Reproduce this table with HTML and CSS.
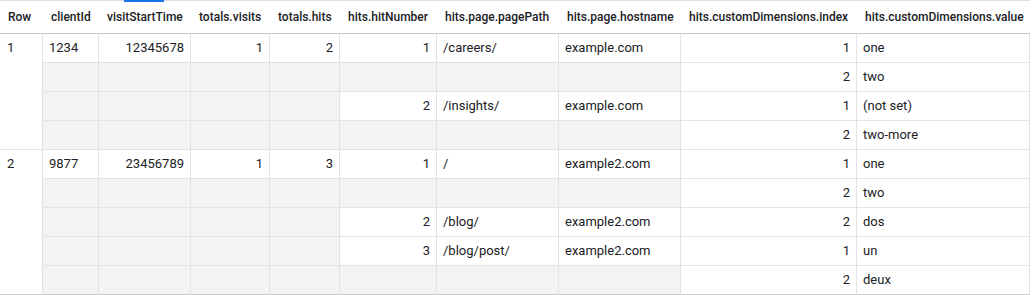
FILE: index.html
```html
<!DOCTYPE html>
<html>
<head>
<meta charset="utf-8">
<link rel="stylesheet" href="styles.css">
</head>
<body>
<div class="wrap">
  <div class="tab-indicator"></div>
  <table class="results">
    <colgroup>
      <col class="c-row"><col class="c-client"><col class="c-start"><col class="c-visits"><col class="c-hits"><col class="c-hitnum"><col class="c-path"><col class="c-host"><col class="c-index"><col class="c-value">
    </colgroup>
    <thead>
      <tr>
        <th>Row</th><th>clientId</th><th>visitStartTime</th><th>totals.visits</th><th>totals.hits</th><th>hits.hitNumber</th><th>hits.page.pagePath</th><th>hits.page.hostname</th><th>hits.customDimensions.index</th><th>hits.customDimensions.value</th>
      </tr>
    </thead>
    <tbody>
      <tr>
        <td class="rownum" rowspan="4">1</td><td>1234</td><td class="num">12345678</td><td class="num">1</td><td class="num">2</td><td class="num">1</td><td>/careers/</td><td>example.com</td><td class="num">1</td><td>one</td>
      </tr>
      <tr>
        <td class="rep"></td><td class="rep"></td><td class="rep"></td><td class="rep"></td><td class="rep"></td><td class="rep"></td><td class="rep"></td><td class="num">2</td><td>two</td>
      </tr>
      <tr>
        <td class="rep"></td><td class="rep"></td><td class="rep"></td><td class="rep"></td><td class="num">2</td><td>/insights/</td><td>example.com</td><td class="num">1</td><td>(not set)</td>
      </tr>
      <tr>
        <td class="rep"></td><td class="rep"></td><td class="rep"></td><td class="rep"></td><td class="rep"></td><td class="rep"></td><td class="rep"></td><td class="num">2</td><td>two-more</td>
      </tr>
      <tr>
        <td class="rownum last" rowspan="5">2</td><td>9877</td><td class="num">23456789</td><td class="num">1</td><td class="num">3</td><td class="num">1</td><td>/</td><td>example2.com</td><td class="num">1</td><td>one</td>
      </tr>
      <tr>
        <td class="rep"></td><td class="rep"></td><td class="rep"></td><td class="rep"></td><td class="rep"></td><td class="rep"></td><td class="rep"></td><td class="num">2</td><td>two</td>
      </tr>
      <tr>
        <td class="rep"></td><td class="rep"></td><td class="rep"></td><td class="rep"></td><td class="num">2</td><td>/blog/</td><td>example2.com</td><td class="num">2</td><td>dos</td>
      </tr>
      <tr>
        <td class="rep"></td><td class="rep"></td><td class="rep"></td><td class="rep"></td><td class="num">3</td><td>/blog/post/</td><td>example2.com</td><td class="num">1</td><td>un</td>
      </tr>
      <tr class="last-row">
        <td class="rep"></td><td class="rep"></td><td class="rep"></td><td class="rep"></td><td class="rep"></td><td class="rep"></td><td class="rep"></td><td class="num">2</td><td>deux</td>
      </tr>
    </tbody>
  </table>
</div>
</body>
</html>
```
FILE: styles.css
```css
html, body {
  margin: 0;
  padding: 0;
  background: #ffffff;
}

body {
  font-family: Roboto, "Liberation Sans", Arial, sans-serif;
  color: #202124;
}

.wrap {
  position: relative;
  width: 1030px;
}

.tab-indicator {
  position: absolute;
  top: 0;
  left: 124px;
  width: 40px;
  height: 2px;
  background: #1a73e8;
}

.results {
  table-layout: fixed;
  width: 1030px;
  border-collapse: separate;
  border-spacing: 0;
  border-top: 1px solid #e0e0e0;
}

.c-row { width: 43px; }
.c-client { width: 56px; }
.c-start { width: 92px; }
.c-visits { width: 79px; }
.c-hits { width: 70px; }
.c-hitnum { width: 97px; }
.c-path { width: 122px; }
.c-host { width: 122px; }
.c-index { width: 176px; }
.c-value { width: 173px; }

.results th {
  font-size: 12px;
  font-weight: 500;
  text-align: left;
  height: 32px;
  line-height: 32px;
  padding: 0 8px;
  white-space: nowrap;
  border-bottom: 1px solid #c8c8c8;
  color: #202124;
}

.results td {
  font-size: 13px;
  height: 28px;
  line-height: 28px;
  padding: 0 6px;
  white-space: nowrap;
  border-right: 1px solid #e3e3e3;
  border-bottom: 1px solid #e3e3e3;
  vertical-align: middle;
  background: #ffffff;
}

.results td.num {
  text-align: right;
}

.results td.rep {
  background: #f3f3f3;
}

.results td.rownum {
  vertical-align: top;
  padding-left: 7px;
}

.results td.rownum.last,
.results tr.last-row td {
  border-bottom-color: #cccccc;
}
```
